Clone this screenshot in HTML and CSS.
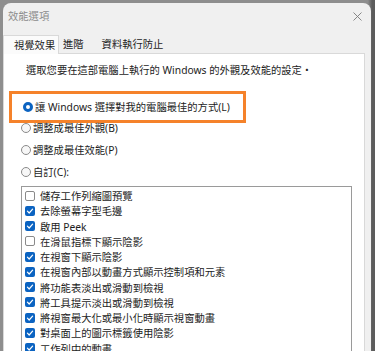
FILE: index.html
```html
<!DOCTYPE html>
<html lang="zh-Hant">
<head>
<meta charset="utf-8">
<title>效能選項</title>
<link rel="stylesheet" href="styles.css">
</head>
<body>
<div class="window">
  <div class="titlebar">
    <span class="title">效能選項</span>
    <svg class="close" width="9" height="9" viewBox="0 0 9 9"><path d="M0.5 0.5 L8.5 8.5 M8.5 0.5 L0.5 8.5" stroke="#7a7a7a" stroke-width="0.9" fill="none"/></svg>
  </div>
  <div class="tabs">
    <div class="tab selected">視覺效果</div>
    <div class="tab second">進階</div>
    <div class="tab third">資料執行防止</div>
  </div>
  <div class="panel">
    <p class="intro">選取您要在這部電腦上執行的 Windows 的外觀及效能的設定・</p>
    <div class="highlight">
      <span class="radio on"></span><span class="label">讓 Windows 選擇對我的電腦最佳的方式(L)</span>
    </div>
    <div class="radios">
      <div class="rrow"><span class="radio"></span><span class="label">調整成最佳外觀(B)</span></div>
      <div class="rrow"><span class="radio"></span><span class="label">調整成最佳效能(P)</span></div>
      <div class="rrow"><span class="radio"></span><span class="label">自訂(C):</span></div>
    </div>
    <div class="list">
      <div class="item"><span class="cb"></span><span>儲存工作列縮圖預覽</span></div>
      <div class="item"><span class="cb on"><svg viewBox="0 0 10 10"><path d="M2.4 5.2 L4.2 7 L7.6 3.2"/></svg></span><span>去除螢幕字型毛邊</span></div>
      <div class="item"><span class="cb on"><svg viewBox="0 0 10 10"><path d="M2.4 5.2 L4.2 7 L7.6 3.2"/></svg></span><span>啟用 Peek</span></div>
      <div class="item"><span class="cb"></span><span>在滑鼠指標下顯示陰影</span></div>
      <div class="item"><span class="cb on"><svg viewBox="0 0 10 10"><path d="M2.4 5.2 L4.2 7 L7.6 3.2"/></svg></span><span>在視窗下顯示陰影</span></div>
      <div class="item"><span class="cb on"><svg viewBox="0 0 10 10"><path d="M2.4 5.2 L4.2 7 L7.6 3.2"/></svg></span><span>在視窗內部以動畫方式顯示控制項和元素</span></div>
      <div class="item"><span class="cb on"><svg viewBox="0 0 10 10"><path d="M2.4 5.2 L4.2 7 L7.6 3.2"/></svg></span><span>將功能表淡出或滑動到檢視</span></div>
      <div class="item"><span class="cb on"><svg viewBox="0 0 10 10"><path d="M2.4 5.2 L4.2 7 L7.6 3.2"/></svg></span><span>將工具提示淡出或滑動到檢視</span></div>
      <div class="item"><span class="cb on"><svg viewBox="0 0 10 10"><path d="M2.4 5.2 L4.2 7 L7.6 3.2"/></svg></span><span>將視窗最大化或最小化時顯示視窗動畫</span></div>
      <div class="item"><span class="cb on"><svg viewBox="0 0 10 10"><path d="M2.4 5.2 L4.2 7 L7.6 3.2"/></svg></span><span>對桌面上的圖示標籤使用陰影</span></div>
      <div class="item"><span class="cb on"><svg viewBox="0 0 10 10"><path d="M2.4 5.2 L4.2 7 L7.6 3.2"/></svg></span><span>工作列中的動畫</span></div>
    </div>
  </div>
</div>
</body>
</html>
```
FILE: styles.css
```css
html, body {
  margin: 0;
  height: 351px;
  overflow: hidden;
}
body {
  background: linear-gradient(to right, #8e8e8e 0, #8e8e8e 368px, #5c5c5c 372px);
  font-family: "Noto Sans", "Noto Sans CJK TC", sans-serif;
  font-size: 10.3px;
  color: #1c1c1c;
}
.window {
  margin: 3px 0 0 3px;
  width: 368px;
  height: 360px;
  background: #f0f0f0;
  border-radius: 8px 8px 0 0;
  display: flex;
  flex-direction: column;
}
.titlebar {
  height: 32px;
  display: flex;
  align-items: center;
  justify-content: space-between;
  padding: 0 9px 0 5px;
}
.title {
  color: #8c8c8c;
  line-height: 14px;
  margin-top: -6px;
}
.close {
  margin-top: -5px;
}
.tabs {
  height: 18px;
  display: flex;
  align-items: flex-end;
}
.tab {
  line-height: 17px;
  height: 17px;
}
.tab.selected {
  height: 18px;
  line-height: 18px;
  width: 56px;
  box-sizing: border-box;
  padding-left: 10px;
  background: #fbfbfb;
  border: 1px solid #d9d9d9;
  border-bottom: none;
  position: relative;
  z-index: 1;
  margin-bottom: -1px;
  height: 19px;
}
.tab.second {
  padding: 0 12px 0 4px;
}
.tab.third {
  padding: 0 6px;
}
.panel {
  width: 362px;
  box-sizing: border-box;
  flex: 1;
  background: #fff;
  border: 1px solid #d9d9d9;
  border-bottom: none;
}
.intro {
  margin: 8px 0 0 22px;
  line-height: 16px;
}
.highlight {
  margin: 13px 0 0 5px;
  width: 237px;
  height: 32px;
  box-sizing: border-box;
  border: 3px solid #f5822a;
  display: flex;
  align-items: center;
  padding-left: 11px;
}
.radios {
  display: flex;
  flex-direction: column;
  gap: 12px;
}
.rrow {
  display: flex;
  align-items: center;
  height: 10px;
  margin-left: 17px;
}
.radio {
  width: 10px;
  height: 10px;
  box-sizing: border-box;
  border-radius: 50%;
  border: 1px solid #8a8a8a;
  background: #f7f7f7;
  flex: none;
}
.radio.on {
  border: 3px solid #0b63c1;
  background: #fff;
}
.label {
  margin-left: 2px;
  line-height: 12px;
  white-space: nowrap;
}
.list {
  margin: 9px 0 0 17px;
  width: 331px;
  box-sizing: border-box;
  border: 1px solid #9a9a9a;
  border-bottom: none;
  background: #fff;
  padding-top: 1px;
}
.item {
  display: flex;
  align-items: center;
  height: 15.25px;
  white-space: nowrap;
}
.cb {
  width: 10px;
  height: 10px;
  box-sizing: border-box;
  margin: 0 5px 0 3px;
  border: 1px solid #8a8a8a;
  border-radius: 2px;
  background: #fff;
  flex: none;
  display: flex;
}
.cb.on {
  border: none;
  background: #0b63c1;
}
.cb svg {
  width: 10px;
  height: 10px;
}
.cb svg path {
  fill: none;
  stroke: #fff;
  stroke-width: 1.2;
  stroke-linecap: round;
  stroke-linejoin: round;
}
```
